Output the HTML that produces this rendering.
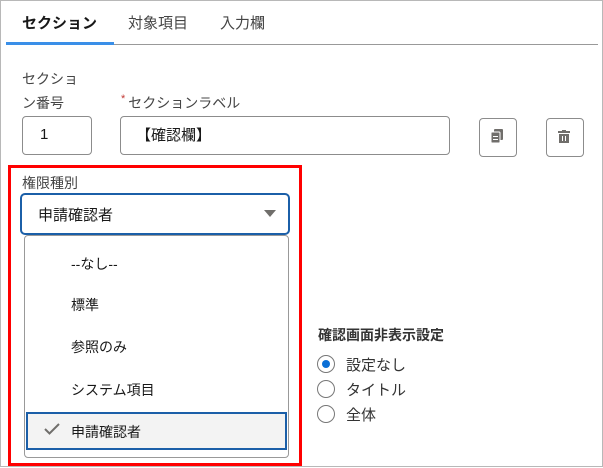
<!DOCTYPE html><html><head><meta charset="utf-8"><style>
body{margin:0;width:603px;height:468px;background:#fff;font-family:"Liberation Sans","Noto Sans CJK JP",sans-serif;font-size:14px;color:#181818;position:relative;overflow:hidden}
.a{position:absolute}
.frame{left:0;top:0;width:601px;height:465px;border:1px solid #b8b8b8}
.inp{border:1px solid #8c8c8c;border-radius:4px;background:#fff}
.btn{border:1px solid #8c8c8c;border-radius:4px;background:#fff}
.radio{width:16px;height:16px;border:1px solid #777;border-radius:50%;background:#fff}
</style></head><body>
<div class="a frame"></div>
<div class="a" style="left:22px;top:12px;font-weight:bold;font-size:15px">セクション</div>
<div class="a" style="left:128px;top:12px;color:#444;font-size:15px">対象項目</div>
<div class="a" style="left:220px;top:12px;color:#444;font-size:15px">入力欄</div>
<div class="a" style="left:6px;top:44px;width:592px;height:1px;background:#999"></div>
<div class="a" style="left:6px;top:42px;width:108px;height:3px;background:#3a8fe8"></div>
<div class="a" style="left:22px;top:69px;color:#444">セクショ</div>
<div class="a" style="left:22px;top:93px;color:#444">ン番号</div>
<div class="a" style="left:121px;top:93px;color:#444"><span style="color:#c23934;font-size:11px;vertical-align:top;margin-right:3px">*</span>セクションラベル</div>
<div class="a inp" style="left:22px;top:116px;width:68px;height:37px"></div>
<div class="a" style="left:40px;top:126px;font-size:15px">1</div>
<div class="a inp" style="left:120px;top:116px;width:328px;height:37px"></div>
<div class="a" style="left:136px;top:124px;font-size:15px">【確認欄】</div>
<div class="a btn" style="left:479px;top:118px;width:36px;height:37px"></div>
<svg class="a" style="left:490px;top:129px" width="14" height="15" viewBox="0 0 14 15"><rect x="4" y="0" width="9" height="11" rx="1" fill="#706e6b"/><rect x="1" y="3" width="9" height="11" rx="1" fill="#706e6b" stroke="#fff" stroke-width="1"/><rect x="3" y="7" width="5" height="1" fill="#fff"/><rect x="3" y="10" width="5" height="1" fill="#fff"/></svg>
<div class="a btn" style="left:546px;top:118px;width:36px;height:37px"></div>
<svg class="a" style="left:558px;top:130px" width="12" height="13" viewBox="0 0 12 13"><rect x="0" y="1" width="12" height="2" fill="#706e6b"/><rect x="4" y="0" width="4" height="2" fill="#706e6b"/><rect x="1" y="4" width="10" height="9" fill="#706e6b"/><rect x="4" y="6" width="1" height="5" fill="#fff"/><rect x="7" y="6" width="1" height="5" fill="#fff"/></svg>
<div class="a" style="left:8px;top:165px;width:288px;height:295px;border:3px solid #f00"></div>
<div class="a" style="left:22px;top:173px;color:#444">権限種別</div>
<div class="a" style="left:20px;top:193px;width:266px;height:38px;border:2px solid #1b5fa8;border-radius:5px;background:#fff"></div>
<div class="a" style="left:38px;top:204px;font-size:15px">申請確認者</div>
<div class="a" style="left:264px;top:210px;width:0;height:0;border-left:6px solid transparent;border-right:6px solid transparent;border-top:7px solid #706e6b"></div>
<div class="a" style="left:24px;top:235px;width:263px;height:221px;border:1px solid #999;border-radius:4px;background:#fff"></div>
<div class="a" style="left:71px;top:254px">--なし--</div>
<div class="a" style="left:71px;top:295px">標準</div>
<div class="a" style="left:71px;top:337px">参照のみ</div>
<div class="a" style="left:71px;top:380px">システム項目</div>
<div class="a" style="left:26px;top:412px;width:257px;height:34px;border:2px solid #1b5fa8;background:#f3f3f3"></div>
<svg class="a" style="left:44px;top:423px" width="16" height="12" viewBox="0 0 16 12"><path d="M1 6 L5.5 10.5 L15 1" fill="none" stroke="#706e6b" stroke-width="2"/></svg>
<div class="a" style="left:71px;top:422px">申請確認者</div>
<div class="a" style="left:318px;top:325px;font-weight:bold;color:#333">確認画面非表示設定</div>
<div class="a radio" style="left:317px;top:355px"></div>
<div class="a" style="left:322px;top:360px;width:8px;height:8px;border-radius:50%;background:#0b6fd6"></div>
<div class="a" style="left:346px;top:354px;font-size:15px;color:#333">設定なし</div>
<div class="a radio" style="left:317px;top:380px"></div>
<div class="a" style="left:346px;top:379px;font-size:15px;color:#333">タイトル</div>
<div class="a radio" style="left:317px;top:405px"></div>
<div class="a" style="left:346px;top:404px;font-size:15px;color:#333">全体</div>
</body></html>
